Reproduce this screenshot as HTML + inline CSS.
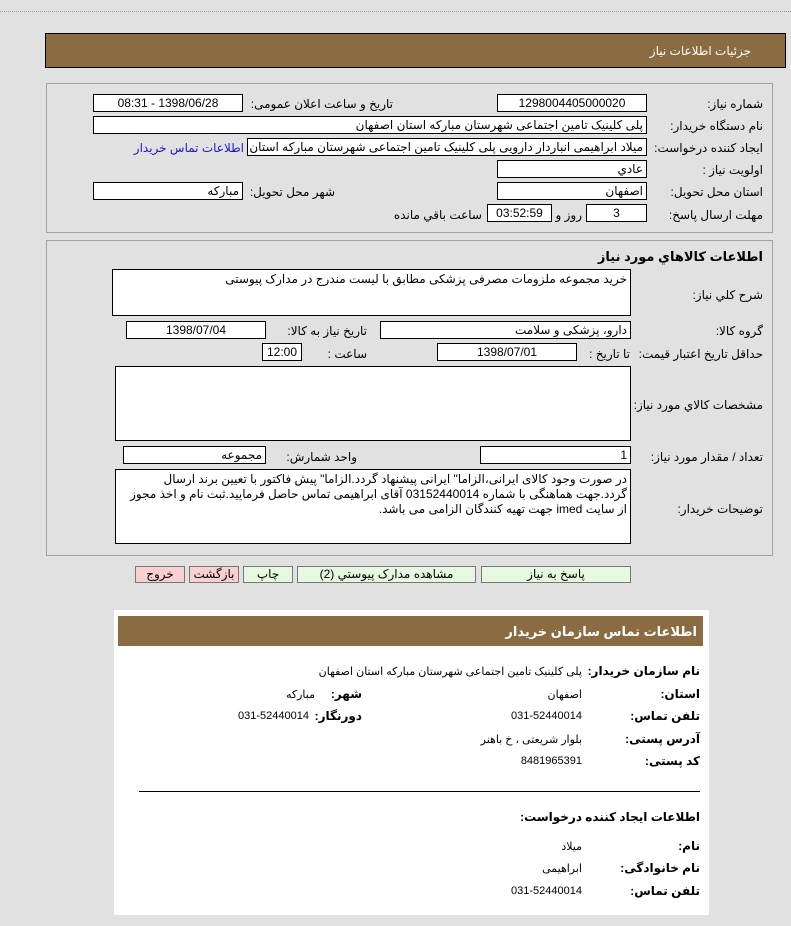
<!DOCTYPE html>
<html><head><meta charset="utf-8"><style>
body{margin:0;width:791px;height:926px;background:#e1e1e1;position:relative;overflow:hidden;font-family:"Liberation Sans","DejaVu Sans",sans-serif;font-size:12px;color:#000}
.a{position:absolute;white-space:nowrap}
.l{position:absolute;white-space:nowrap;direction:rtl;text-align:right}
.i{position:absolute;background:#fff;border:1px solid #000;box-sizing:border-box;height:18px;line-height:16px;direction:rtl;padding:0 3px;white-space:nowrap;overflow:hidden}
.c{text-align:center}
.box{position:absolute;border:1px solid #a0a0a0;box-sizing:border-box}
.btn{position:absolute;height:17px;box-sizing:border-box;border:1px solid #777;background:#e6f9e0;text-align:center;line-height:15px;direction:rtl}
.pk{background:#f9d0d0}
.b{font-weight:bold}
.ta{position:absolute;background:#fff;border:1px solid #000;box-sizing:border-box;direction:rtl;padding:2px 3px;line-height:15px}
</style></head><body>
<div class="a" style="left:0;top:11px;width:791px;border-top:1px dotted #999"></div>
<div class="a" style="left:45px;top:33px;width:741px;height:35px;background:#8b6c42;border:1px solid #000;box-sizing:border-box"></div>
<div class="l" style="right:40px;top:44px;color:#fff">جزئیات اطلاعات نیاز</div>

<div class="box" style="left:46px;top:83px;width:727px;height:150px"></div>
<div class="l" style="right:28px;top:97px">شماره نیاز:</div>
<div class="i c" style="left:497px;top:94px;width:150px">1298004405000020</div>
<div class="l" style="right:398px;top:97px">تاریخ و ساعت اعلان عمومی:</div>
<div class="i c" style="left:93px;top:94px;width:150px">1398/06/28 - 08:31</div>
<div class="l" style="right:28px;top:119px">نام دستگاه خریدار:</div>
<div class="i" style="left:93px;top:116px;width:554px">پلی کلینیک تامین اجتماعی شهرستان مبارکه استان اصفهان</div>
<div class="l" style="right:28px;top:141px">ایجاد کننده درخواست:</div>
<div class="i" style="left:247px;top:138px;width:400px">میلاد ابراهیمی انباردار دارویی پلی کلینیک تامین اجتماعی شهرستان مبارکه استان اصفهان</div>
<div class="l" style="right:547px;top:141px;color:#1a1acc">اطلاعات تماس خریدار</div>
<div class="l" style="right:28px;top:163px">اولویت نیاز :</div>
<div class="i" style="left:497px;top:160px;width:150px">عادي</div>
<div class="l" style="right:28px;top:185px">استان محل تحویل:</div>
<div class="i" style="left:497px;top:182px;width:150px">اصفهان</div>
<div class="l" style="right:456px;top:185px">شهر محل تحویل:</div>
<div class="i" style="left:93px;top:182px;width:150px">مبارکه</div>
<div class="l" style="right:28px;top:208px">مهلت ارسال پاسخ:</div>
<div class="i c" style="left:586px;top:204px;width:61px">3</div>
<div class="l" style="right:209px;top:208px">روز و</div>
<div class="i c" style="left:487px;top:204px;width:65px">03:52:59</div>
<div class="l" style="right:309px;top:208px">ساعت باقي مانده</div>

<div class="box" style="left:46px;top:240px;width:727px;height:316px"></div>
<div class="l b" style="right:28px;top:249px;font-size:13px">اطلاعات کالاهاي مورد نياز</div>
<div class="l" style="right:28px;top:288px">شرح کلي نياز:</div>
<div class="ta" style="left:112px;top:269px;width:519px;height:47px">خرید مجموعه ملزومات مصرفی پزشکی مطابق با لیست مندرج در مدارک پیوستی</div>
<div class="l" style="right:28px;top:324px">گروه کالا:</div>
<div class="i" style="left:380px;top:321px;width:251px">دارو، پزشکی و سلامت</div>
<div class="l" style="right:424px;top:324px">تاریخ نیاز به کالا:</div>
<div class="i c" style="left:126px;top:321px;width:140px">1398/07/04</div>
<div class="l" style="right:28px;top:347px">حداقل تاریخ اعتبار قیمت:</div>
<div class="l" style="right:161px;top:347px">تا تاریخ :</div>
<div class="i c" style="left:437px;top:343px;width:140px">1398/07/01</div>
<div class="l" style="right:424px;top:347px">ساعت :</div>
<div class="i c" style="left:262px;top:343px;width:40px">12:00</div>
<div class="ta" style="left:115px;top:366px;width:516px;height:75px"></div>
<div class="l" style="right:28px;top:398px">مشخصات کالاي مورد نياز:</div>
<div class="l" style="right:28px;top:450px">تعداد / مقدار مورد نیاز:</div>
<div class="i" style="left:480px;top:446px;width:151px">1</div>
<div class="l" style="right:434px;top:450px">واحد شمارش:</div>
<div class="i" style="left:123px;top:446px;width:143px">مجموعه</div>
<div class="ta" style="left:115px;top:469px;width:516px;height:75px">در صورت وجود کالای ایرانی،الزاما" ایرانی پیشنهاد گردد.الزاما" پیش فاکتور با تعیین برند ارسال گردد.جهت هماهنگی با شماره 03152440014 آقای ابراهیمی تماس حاصل فرمایید.ثبت نام و اخذ مجوز از سایت imed جهت تهیه کنندگان الزامی می باشد.</div>
<div class="l" style="right:28px;top:502px">توضیحات خریدار:</div>

<div class="btn" style="left:481px;top:566px;width:150px">پاسخ به نیاز</div>
<div class="btn" style="left:297px;top:566px;width:179px">مشاهده مدارک پیوستي (2)</div>
<div class="btn" style="left:243px;top:566px;width:50px">چاپ</div>
<div class="btn pk" style="left:189px;top:566px;width:50px">بازگشت</div>
<div class="btn pk" style="left:135px;top:566px;width:50px">خروج</div>

<div class="a" style="left:114px;top:610px;width:595px;height:305px;background:#fff"></div>
<div class="a" style="left:118px;top:616px;width:585px;height:30px;background:#8b6c42"></div>
<div class="l b" style="right:94px;top:624px;color:#fff;font-size:13px">اطلاعات تماس سازمان خریدار</div>
<div class="l b" style="right:91px;top:664px">نام سازمان خریدار:</div>
<div class="l" style="right:209px;top:665px;font-size:11px">پلی کلینیک تامین اجتماعی شهرستان مبارکه استان اصفهان</div>
<div class="l b" style="right:91px;top:687px">استان:</div>
<div class="l" style="right:209px;top:688px;font-size:11px">اصفهان</div>
<div class="l b" style="right:429px;top:687px">شهر:</div>
<div class="l" style="right:476px;top:688px;font-size:11px">مبارکه</div>
<div class="l b" style="right:91px;top:709px">تلفن تماس:</div>
<div class="l" style="right:209px;top:710px;font-size:11px">031-52440014</div>
<div class="l b" style="right:429px;top:709px">دورنگار:</div>
<div class="l" style="right:482px;top:710px;font-size:11px">031-52440014</div>
<div class="l b" style="right:91px;top:732px">آدرس پستی:</div>
<div class="l" style="right:209px;top:733px;font-size:11px">بلوار شریعتی ، خ باهنر</div>
<div class="l b" style="right:91px;top:754px">کد پستی:</div>
<div class="l" style="right:209px;top:755px;font-size:11px">8481965391</div>
<div class="a" style="left:139px;top:791px;width:561px;border-top:1px solid #000"></div>
<div class="l b" style="right:91px;top:810px">اطلاعات ایجاد کننده درخواست:</div>
<div class="l b" style="right:91px;top:839px">نام:</div>
<div class="l" style="right:209px;top:840px;font-size:11px">میلاد</div>
<div class="l b" style="right:91px;top:861px">نام خانوادگی:</div>
<div class="l" style="right:209px;top:862px;font-size:11px">ابراهیمی</div>
<div class="l b" style="right:91px;top:884px">تلفن تماس:</div>
<div class="l" style="right:209px;top:885px;font-size:11px">031-52440014</div>
</body></html>
